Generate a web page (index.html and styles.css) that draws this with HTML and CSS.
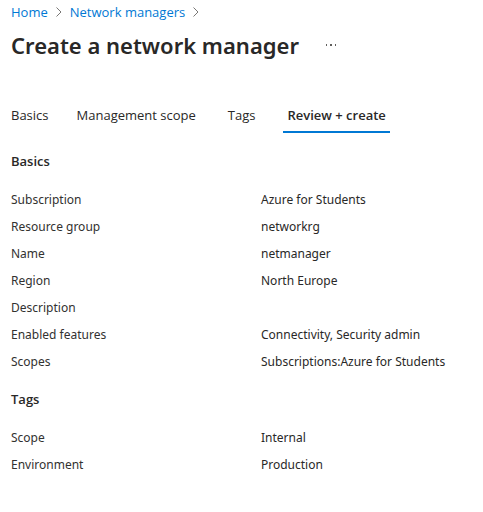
FILE: index.html
```html
<!DOCTYPE html>
<html lang="en">
<head>
<meta charset="utf-8">
<title>Create a network manager</title>
<link rel="stylesheet" href="styles.css">
</head>
<body>
<nav class="breadcrumb" aria-label="Breadcrumb">
  <a href="#">Home</a>
  <svg class="chevron" viewBox="0 0 8 10" aria-hidden="true"><path d="M1.5 0.5 6 5 1.5 9.5"/></svg>
  <a href="#">Network managers</a>
  <svg class="chevron" viewBox="0 0 8 10" aria-hidden="true"><path d="M1.5 0.5 6 5 1.5 9.5"/></svg>
</nav>
<header class="title-bar">
  <h1>Create a network manager</h1>
  <button class="more" type="button" aria-label="More"><svg viewBox="0 0 12 2" aria-hidden="true"><path d="M1 0h1v2H1zM5 0h2v2H5zM10 0h1v2h-1z"/></svg></button>
</header>
<main>
  <div class="tabs" role="tablist">
    <button class="tab" type="button" role="tab">Basics</button>
    <button class="tab" type="button" role="tab">Management scope</button>
    <button class="tab" type="button" role="tab">Tags</button>
    <button class="tab selected" type="button" role="tab" aria-selected="true">Review + create</button>
  </div>
  <section>
    <h2>Basics</h2>
    <dl>
      <dt>Subscription</dt><dd>Azure for Students</dd>
      <dt>Resource group</dt><dd>networkrg</dd>
      <dt>Name</dt><dd>netmanager</dd>
      <dt>Region</dt><dd>North Europe</dd>
      <dt>Description</dt><dd></dd>
      <dt>Enabled features</dt><dd>Connectivity, Security admin</dd>
      <dt>Scopes</dt><dd>Subscriptions:Azure for Students</dd>
    </dl>
  </section>
  <section>
    <h2>Tags</h2>
    <dl>
      <dt>Scope</dt><dd>Internal</dd>
      <dt>Environment</dt><dd>Production</dd>
    </dl>
  </section>
</main>
</body>
</html>
```
FILE: styles.css
```css
* { box-sizing: border-box; }
body {
  margin: 0;
  padding: 3px 11px;
  background: #fff;
  color: #292827;
  font: 13px/18px "Open Sans", "Noto Sans", sans-serif;
}
.breadcrumb { display: flex; align-items: center; gap: 7px; }
.breadcrumb a { color: #0078d4; text-decoration: none; }
.chevron { width: 8px; height: 10px; fill: none; stroke: #797775; }
.title-bar { display: flex; align-items: center; gap: 26px; margin-top: 8px; }
h1 { margin: 0; font-family: "Noto Sans", sans-serif; font-size: 22px; line-height: 32px; font-weight: 600; }
.more { display: flex; padding: 0; border: 0; background: none; }
.more svg { width: 12px; height: 2px; fill: #605e5c; }
.tabs { display: flex; gap: 24px; margin-top: 38px; }
.tab {
  padding: 7px 4px;
  border: 0;
  border-bottom: 2px solid transparent;
  background: none;
  color: inherit;
  font: inherit;
}
.tab:first-child { padding: 7px 0; }
.tab.selected { border-color: #0078d4; font-weight: 600; }
h2 { margin: 19px 0 21px; font-size: 13px; line-height: 18px; font-weight: 600; }
dl {
  display: grid;
  grid-template-columns: 250px 1fr;
  grid-auto-rows: minmax(18px, auto);
  row-gap: 9px;
  margin: 0;
  font-family: "Noto Sans", sans-serif;
  font-size: 12px;
}
dt { color: #323130; }
dd { margin: 0; }
```
